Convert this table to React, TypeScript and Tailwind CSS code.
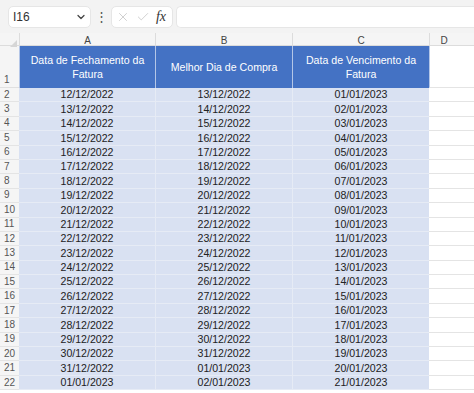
import { ChevronDown, X, Check } from 'lucide-react'

function fmt(d: Date) {
  const dd = String(d.getDate()).padStart(2, '0')
  const mm = String(d.getMonth() + 1).padStart(2, '0')
  return `${dd}/${mm}/${d.getFullYear()}`
}

function addDays(base: Date, n: number) {
  const d = new Date(base)
  d.setDate(d.getDate() + n)
  return d
}

const rows = Array.from({ length: 21 }, (_, i) => ({
  fechamento: fmt(addDays(new Date(2022, 11, 12), i)),
  melhor: fmt(addDays(new Date(2022, 11, 13), i)),
  vencimento: fmt(addDays(new Date(2023, 0, 1), i)),
}))

const cols = 'grid grid-cols-[19px_136px_137px_137px_1fr]'

export default function App() {
  return (
    <div
      className="w-[474px] h-[393px] overflow-hidden bg-white text-[#222]"
      style={{ fontFamily: '"Liberation Sans", Arial, sans-serif' }}
    >
      {/* formula bar */}
      <div className="h-[33px] bg-[#f3f3f3] flex items-center pl-[8px] gap-[3px]">
        <div className="w-[83px] h-[22px] bg-white rounded-[5px] border border-[#e6e6e6] flex items-center justify-between pl-[4px] pr-[3px]">
          <span className="text-[12px] text-[#333]">I16</span>
          <ChevronDown size={12} strokeWidth={2.5} className="text-[#444]" />
        </div>
        <span className="w-[14px] text-center text-[#555] text-[13px] leading-none">⋮</span>
        <div className="w-[62px] h-[22px] bg-white rounded-[5px] border border-[#e6e6e6] flex items-center justify-between px-[4px]">
          <X size={14} strokeWidth={1.2} className="text-[#bbb]" />
          <Check size={14} strokeWidth={1.2} className="text-[#bbb]" />
          <span
            className="text-[14px] italic text-[#333] pr-[2px]"
            style={{ fontFamily: '"Liberation Serif", serif' }}
          >
            fx
          </span>
        </div>
        <div className="flex-1 h-[22px] bg-white rounded-l-[5px] border border-[#e6e6e6] border-r-0" />
      </div>

      {/* column letters */}
      <div className={`${cols} h-[13px] bg-[#f5f5f5] border-b border-[#dcdcdc] text-[10px] text-[#444]`}>
        <div className="relative">
          <span className="absolute right-[2px] bottom-[1px] w-0 h-0 border-l-[7px] border-l-transparent border-b-[7px] border-b-[#d6d6d6]" />
        </div>
        <div className="flex items-center justify-center border-l border-[#dcdcdc]">A</div>
        <div className="flex items-center justify-center border-l border-[#dcdcdc]">B</div>
        <div className="flex items-center justify-center border-l border-[#dcdcdc]">C</div>
        <div className="flex items-center justify-center border-l border-[#dcdcdc] pr-[16px]">D</div>
      </div>

      {/* header row */}
      <div className={`${cols} h-[42px]`}>
        <div className="bg-[#f5f5f5] border-b border-[#e0e0e0] flex items-end pl-[4px] text-[10px] text-[#555]">1</div>
        {['Data de Fechamento da Fatura', 'Melhor Dia de Compra', 'Data de Vencimento da Fatura'].map((t) => (
          <div
            key={t}
            className="bg-[#4472c4] border-l border-[#b4c6e7] flex items-center justify-center text-center text-white text-[10.6px] leading-[14px] px-[4px]"
          >
            {t}
          </div>
        ))}
        <div className="border-l border-[#b4c6e7] border-b border-b-[#e4e4e4]" />
      </div>

      {/* data rows */}
      {rows.map((r, i) => (
        <div key={i} className={`${cols} h-[14.4px] text-[10.6px] leading-none`}>
          <div className="bg-[#f5f5f5] border-b border-[#e4e4e4] flex items-center pl-[4px] text-[10px] text-[#555]">
            {i + 2}
          </div>
          <div className="bg-[#d9e1f2] border-b border-[#e6ebf5] flex items-center justify-center">{r.fechamento}</div>
          <div className="bg-[#d9e1f2] border-l border-b border-[#e6ebf5] flex items-center justify-center">{r.melhor}</div>
          <div className="bg-[#d9e1f2] border-l border-b border-[#e6ebf5] flex items-center justify-center">{r.vencimento}</div>
          <div className="border-b border-[#e4e4e4]" />
        </div>
      ))}
    </div>
  )
}
